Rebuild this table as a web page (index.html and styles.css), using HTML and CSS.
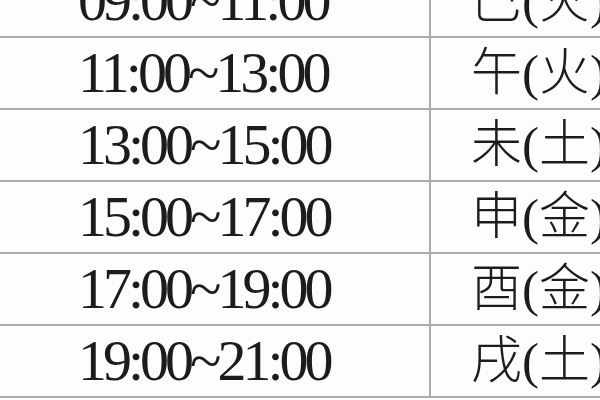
FILE: index.html
```html
<!DOCTYPE html>
<html lang="zh-Hant">
<head>
<meta charset="utf-8">
<link rel="stylesheet" href="styles.css">
</head>
<body>
<div class="table">
  <div class="row"><div class="time">09:00~11:00</div><div class="branch">巳(火)</div></div>
  <div class="row"><div class="time">11:00~13:00</div><div class="branch">午(火)</div></div>
  <div class="row"><div class="time">13:00~15:00</div><div class="branch">未(土)</div></div>
  <div class="row"><div class="time">15:00~17:00</div><div class="branch">申(金)</div></div>
  <div class="row"><div class="time">17:00~19:00</div><div class="branch">酉(金)</div></div>
  <div class="row"><div class="time">19:00~21:00</div><div class="branch">戌(土)</div></div>
</div>
</body>
</html>
```
FILE: styles.css
```css
html, body {
  margin: 0;
  padding: 0;
  background: #fdfdfd;
  overflow: hidden;
  width: 600px;
  height: 400px;
}
.table {
  margin-top: -34px;
  display: flex;
  flex-direction: column;
}
.row {
  display: grid;
  grid-template-columns: 431px 1fr;
  height: 70px;
  border-bottom: 2px solid #adadad;
}
.time {
  display: flex;
  align-items: center;
  padding-left: 78px;
  border-right: 2px solid #ababab;
  font-family: "Liberation Serif", serif;
  font-size: 58px;
  letter-spacing: -4px;
  line-height: 1;
  color: #1c1c1c;
  white-space: nowrap;
}
.branch {
  display: flex;
  align-items: center;
  padding-left: 40px;
  font-family: "Liberation Serif", "Noto Sans CJK TC", serif;
  font-size: 51px;
  font-weight: 300;
  line-height: 1;
  color: #1c1c1c;
  white-space: nowrap;
}
```
